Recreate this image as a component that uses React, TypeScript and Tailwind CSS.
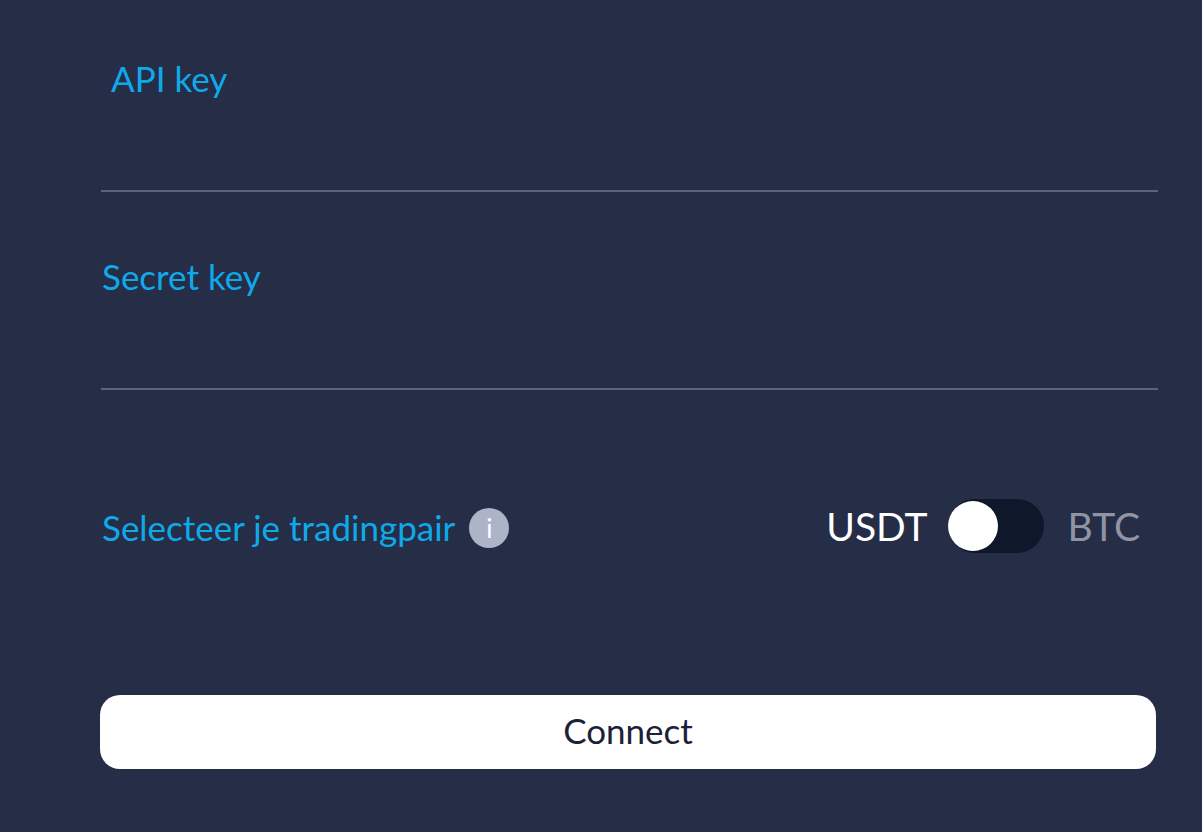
import { useState } from "react";

type FieldProps = {
  id: string;
  label: string;
  type?: string;
  labelClass?: string;
};

function Field({ id, label, type = "text", labelClass = "pl-px" }: FieldProps) {
  return (
    <div className="flex flex-col">
      <label htmlFor={id} className={`text-[35px] leading-[46px] text-[#0fa9e9] ${labelClass}`}>
        {label}
      </label>
      <input
        id={id}
        type={type}
        className="h-[91px] w-full border-b-2 border-[#5d6379] bg-transparent text-3xl text-white outline-none focus:border-[#0fa9e9]"
      />
    </div>
  );
}

export default function App() {
  const [btc, setBtc] = useState(false);

  return (
    <main className="min-h-screen bg-[#262d47] pt-[55px] pr-11 pb-16 pl-[101px] font-['Lato','Open_Sans',sans-serif]">
      <form onSubmit={(event) => event.preventDefault()}>
        <div className="flex flex-col gap-[61px]">
          <Field id="api-key" label="API key" labelClass="pl-2.5" />
          <Field id="secret-key" label="Secret key" type="password" />
        </div>

        <div className="mt-[109px] flex items-center justify-between pr-[18px] pl-px">
          <div className="flex items-center gap-3.5 pt-1">
            <label htmlFor="trading-pair" className="pb-0.5 text-[35px] leading-[46px] text-[#0fa9e9]">
              Selecteer je tradingpair
            </label>
            <button
              type="button"
              aria-label="Info"
              className="flex size-10 items-center justify-center rounded-full bg-[#adb4c8] text-[26px] leading-10 text-white"
            >
              i
            </button>
          </div>
          <div className="flex items-center text-[39px] leading-[52px]">
            <span className={btc ? "text-[#9195a3]" : "text-white"}>USDT</span>
            <input
              id="trading-pair"
              type="checkbox"
              role="switch"
              checked={btc}
              onChange={(event) => setBtc(event.target.checked)}
              className="mr-6 ml-5 flex h-[54px] w-24 cursor-pointer appearance-none items-center rounded-full bg-[#0f172a] before:size-[50px] before:rounded-full before:bg-white checked:justify-end"
            />
            <span className={btc ? "text-white" : "text-[#9195a3]"}>BTC</span>
          </div>
        </div>

        <div className="mt-[142px] -ml-px pr-0.5">
          <button
            type="submit"
            className="h-[74px] w-full rounded-[20px] bg-white pb-1 text-[35px] leading-[46px] text-[#1b2238]"
          >
            Connect
          </button>
        </div>
      </form>
    </main>
  );
}
